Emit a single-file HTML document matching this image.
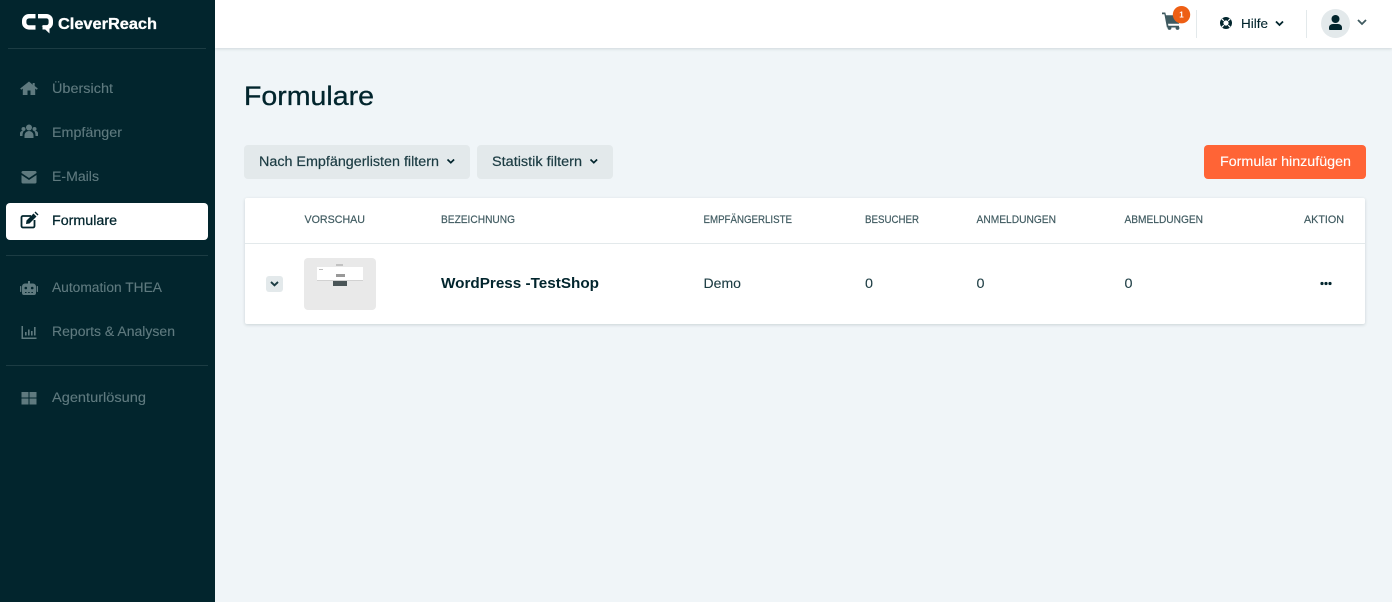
<!DOCTYPE html>
<html lang="de"><head><meta charset="utf-8"><title>Formulare</title>
<style>
html,body{margin:0;padding:0;width:1392px;height:602px;overflow:hidden;background:#f0f5f8}
body{position:relative;font-family:"Liberation Sans",sans-serif}
.b{position:absolute;box-sizing:border-box}
svg{position:absolute;left:0;top:0}
text{font-family:"Liberation Sans",sans-serif}
</style></head><body>
<div class="b" style="left:0;top:0;width:215px;height:602px;background:#02252d"></div>
<div class="b" style="left:8px;top:48px;width:198px;height:1px;background:#1c3c43"></div>
<div class="b" style="left:6px;top:255px;width:202px;height:1px;background:#1c3c43"></div>
<div class="b" style="left:6px;top:365px;width:202px;height:1px;background:#1c3c43"></div>
<div class="b" style="left:6px;top:203px;width:202px;height:37px;background:#fff;border-radius:4px"></div>
<div class="b" style="left:215px;top:0;width:1177px;height:48px;background:#fff;box-shadow:0 1px 3px rgba(2,37,45,.14)"></div>
<div class="b" style="left:1196px;top:10px;width:1px;height:28px;background:#e3e9eb"></div>
<div class="b" style="left:1306px;top:10px;width:1px;height:28px;background:#e3e9eb"></div>
<div class="b" style="left:1321px;top:9px;width:29px;height:29px;background:#e3e9eb;border-radius:50%"></div>
<div class="b" style="left:244px;top:145px;width:226px;height:34px;background:#e3e9eb;border-radius:4px"></div>
<div class="b" style="left:477px;top:145px;width:136px;height:34px;background:#e3e9eb;border-radius:4px"></div>
<div class="b" style="left:1204px;top:145px;width:162px;height:34px;background:#ff6436;border-radius:4px"></div>
<div class="b" style="left:245px;top:198px;width:1120px;height:126px;background:#fff;border-radius:2px;box-shadow:0 1px 3px rgba(2,37,45,.16)"></div>
<div class="b" style="left:245px;top:243px;width:1120px;height:1px;background:#e3e9eb"></div>
<div class="b" style="left:266px;top:276px;width:17px;height:16px;background:#e3e9eb;border-radius:3px"></div>
<div class="b" style="left:304px;top:258px;width:72px;height:52px;background:#e9e9e9;border-radius:4px"></div>
<div class="b" style="left:317px;top:267px;width:46px;height:13px;background:#fff"></div>
<div class="b" style="left:336px;top:264px;width:7px;height:2px;background:#c2c2c2"></div>
<div class="b" style="left:336px;top:274px;width:9px;height:3px;background:#999"></div>
<div class="b" style="left:319px;top:269px;width:4px;height:1px;background:#bbb"></div>
<div class="b" style="left:317px;top:280px;width:46px;height:1px;background:#d2d2d2"></div>
<div class="b" style="left:333px;top:281px;width:14px;height:5px;background:#4a5557"></div>

<svg width="1392" height="602" viewBox="0 0 1392 602">
<!-- logo -->
<g fill="none" stroke="#fff" stroke-width="4.400">
<path d="M35.500 16.200H29a4.800 4.800 0 0 0-4.800 4.800v1.600a4.800 4.800 0 0 0 4.800 4.800h6.500"/>
<path d="M38 16.200h8.500a4.300 4.300 0 0 1 4.300 4.300v2.500a4.300 4.300 0 0 1-4.300 4.300h-4"/>
</g>
<path d="M41.500 26l8 3v4.500z" fill="#fff"/>
<text x="58" y="29" font-size="15.500" font-weight="700" fill="#fff" stroke="#fff" stroke-width=".3" textLength="99" lengthAdjust="spacingAndGlyphs">CleverReach</text>

<!-- sidebar icons -->
<g fill="#5f7a7f">
<path d="M29 81.500l-8.800 7 1 1.300 1.600-1.200V95h4.700v-4.500h3V95h4.700v-6.400l1.600 1.200 1-1.300-3.100-2.500V83h-2v1.700z"/>
<circle cx="29" cy="127.500" r="3"/><circle cx="23.500" cy="129" r="2"/><circle cx="34.500" cy="129" r="2"/>
<path d="M24.500 138v-2.500c0-2.500 2-4.500 4.500-4.500s4.500 2 4.500 4.500V138z"/><path d="M20 136v-2.500c0-1.500 1-2.500 2.500-2.500h1.300c-.8 1.200-1.300 2.500-1.300 4.500v.5zM38 136v-2.500c0-1.500-1-2.500-2.500-2.500h-1.300c.8 1.200 1.300 2.500 1.300 4.500v.5z"/>
<path d="M23 171h12a1.500 1.500 0 0 1 1.500 1.500v.5L29 178l-7.500-5v-.5A1.500 1.500 0 0 1 23 171z"/>
<path d="M21.500 175l7.500 5 7.500-5v7a1.500 1.500 0 0 1-1.500 1.500H23a1.500 1.500 0 0 1-1.500-1.500z"/>
<path d="M28 281h2v2.500h3a3 3 0 0 1 3 3V293a2 2 0 0 1-2 2H24a2 2 0 0 1-2-2v-6.500a3 3 0 0 1 3-3h3z"/>
<rect x="20" y="286" width="1.300" height="6" rx=".6"/><rect x="36.700" y="286" width="1.300" height="6" rx=".6"/>
<rect x="21.500" y="392" width="7" height="5.500"/><rect x="29.500" y="392" width="7" height="5.500"/>
<rect x="21.500" y="398.500" width="7" height="6"/><rect x="29.500" y="398.500" width="7" height="6"/>
<path d="M21.500 326H23v11.500h13.500v1.500h-15z"/>
<rect x="25" y="332" width="1.600" height="3.500"/><rect x="28" y="329.500" width="1.600" height="6"/><rect x="31" y="331" width="1.600" height="4.500"/><rect x="34" y="327" width="1.600" height="8.500"/>
</g>
<g fill="#02252d">
<circle cx="25.800" cy="288" r="1.300"/><circle cx="32.200" cy="288" r="1.300"/>
<rect x="25" y="292" width="1.500" height="1"/><rect x="28.200" y="292" width="1.500" height="1"/><rect x="31.400" y="292" width="1.500" height="1"/>
</g>
<path d="M31 216h-8a1.500 1.500 0 0 0-1.500 1.500V226a1.500 1.500 0 0 0 1.500 1.500h10a1.500 1.500 0 0 0 1.500-1.500v-6" fill="none" stroke="#02252d" stroke-width="1.800"/>
<path d="M26.500 220.500l7-7 3 3-7 7-3.500.5zM34.500 212.500l1-1 3 3-1 1z" fill="#02252d"/>

<!-- sidebar text -->
<g font-size="13.500" fill="#5f7a7f" stroke="#5f7a7f" stroke-width=".12">
<text x="52" y="93" textLength="61" lengthAdjust="spacingAndGlyphs">Übersicht</text>
<text x="52" y="137" textLength="70" lengthAdjust="spacingAndGlyphs">Empfänger</text>
<text x="52" y="181" textLength="47" lengthAdjust="spacingAndGlyphs">E-Mails</text>
<text x="52" y="292" textLength="110" lengthAdjust="spacingAndGlyphs">Automation THEA</text>
<text x="52" y="336" textLength="123" lengthAdjust="spacingAndGlyphs">Reports &amp; Analysen</text>
<text x="52" y="402" textLength="94" lengthAdjust="spacingAndGlyphs">Agenturlösung</text>
</g>
<text x="52" y="225" font-size="13.500" fill="#02252d" stroke="#02252d" stroke-width=".25" textLength="65" lengthAdjust="spacingAndGlyphs">Formulare</text>

<!-- topbar -->
<path d="M1162 12.500h3.300l.7 2.800h14.800l-1.800 8.500h-11l.4 1.900h10.600v1.800h-12.100l-2.500-13.200h-2.400z" fill="#3f5a60"/>
<circle cx="1169.500" cy="28" r="1.900" fill="#3f5a60"/><circle cx="1177.500" cy="28" r="1.900" fill="#3f5a60"/>
<circle cx="1181.500" cy="14.700" r="8.700" fill="#ee5f14"/>
<text x="1181.500" y="17.700" font-size="8" font-weight="700" fill="#fff" text-anchor="middle">1</text>
<circle cx="1226" cy="23" r="4.300" fill="none" stroke="#02252d" stroke-width="3.400"/>
<path d="M1223.800 20.800l-2-2M1228.200 20.800l2-2M1223.800 25.200l-2 2M1228.200 25.200l2 2" stroke="#fff" stroke-width="1.200"/>
<text x="1241" y="28" font-size="13" fill="#02252d" stroke="#02252d" stroke-width=".12" textLength="27" lengthAdjust="spacingAndGlyphs">Hilfe</text>
<path d="M1276 21.500l3.500 3.500 3.500-3.500" fill="none" stroke="#02252d" stroke-width="1.800"/>
<circle cx="1335.500" cy="19" r="4" fill="#02252d"/>
<path d="M1329 29v-1.500c0-2 1.800-3.500 4-3.500h5c2.200 0 4 1.500 4 3.500V29a1 1 0 0 1-1 1h-11a1 1 0 0 1-1-1z" fill="#02252d"/>
<path d="M1358 20l4 4 4-4" fill="none" stroke="#3f5a60" stroke-width="1.800"/>

<!-- title and buttons -->
<text x="244" y="105" font-size="26.500" fill="#02252d" stroke="#02252d" stroke-width=".3" textLength="130" lengthAdjust="spacingAndGlyphs">Formulare</text>
<g font-size="13.500" fill="#1c3c43" stroke="#1c3c43" stroke-width=".2">
<text x="259" y="166" textLength="180" lengthAdjust="spacingAndGlyphs">Nach Empfängerlisten filtern</text>
<text x="492" y="166" textLength="90" lengthAdjust="spacingAndGlyphs">Statistik filtern</text>
</g>
<path d="M447.500 159.500l3.300 3.200 3.300-3.200M590.500 159.500l3.300 3.200 3.300-3.200" fill="none" stroke="#02252d" stroke-width="1.700"/>
<text x="1220" y="166" font-size="13.500" fill="#fff" stroke="#fff" stroke-width=".12" textLength="131" lengthAdjust="spacingAndGlyphs">Formular hinzufügen</text>

<!-- table -->
<g font-size="11" fill="#3f5a60" stroke="#3f5a60" stroke-width=".18">
<text x="304.500" y="223" textLength="60.500" lengthAdjust="spacingAndGlyphs">VORSCHAU</text>
<text x="441" y="223" textLength="74" lengthAdjust="spacingAndGlyphs">BEZEICHNUNG</text>
<text x="703.500" y="223" textLength="88.500" lengthAdjust="spacingAndGlyphs">EMPFÄNGERLISTE</text>
<text x="865" y="223" textLength="54" lengthAdjust="spacingAndGlyphs">BESUCHER</text>
<text x="976.500" y="223" textLength="79.500" lengthAdjust="spacingAndGlyphs">ANMELDUNGEN</text>
<text x="1124.500" y="223" textLength="78.500" lengthAdjust="spacingAndGlyphs">ABMELDUNGEN</text>
<text x="1304" y="223" textLength="40" lengthAdjust="spacingAndGlyphs">AKTION</text>
</g>
<path d="M271 282l3.500 3.300 3.500-3.300" fill="none" stroke="#1c3c43" stroke-width="1.900"/>
<text x="441" y="288" font-size="15" font-weight="700" fill="#02252d" textLength="158" lengthAdjust="spacingAndGlyphs">WordPress -TestShop</text>
<g font-size="13.500" fill="#1c3c43" stroke="#1c3c43" stroke-width=".1">
<text x="703.500" y="288" textLength="37.500" lengthAdjust="spacingAndGlyphs">Demo</text>
<text x="865" y="288" textLength="8" lengthAdjust="spacingAndGlyphs">0</text>
<text x="976.500" y="288" textLength="8" lengthAdjust="spacingAndGlyphs">0</text>
<text x="1124.500" y="288" textLength="8" lengthAdjust="spacingAndGlyphs">0</text>
</g>
<g fill="#02252d"><circle cx="1322" cy="283.500" r="1.600"/><circle cx="1326" cy="283.500" r="1.600"/><circle cx="1330" cy="283.500" r="1.600"/></g>
</svg>
</body></html>
